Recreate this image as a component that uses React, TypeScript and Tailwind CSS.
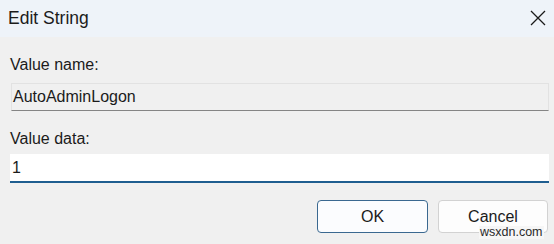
import React from 'react';

const font = { fontFamily: '"Liberation Sans", Arial, sans-serif' };

export default function App() {
  return (
    <div className="relative h-[244px] w-[554px] overflow-hidden bg-[#f0f0f0] text-[#1b1b1b]" style={font}>
      <div className="flex h-[37px] items-center justify-between bg-[#eef3f9] pl-[8px] pr-[8px]">
        <span className="text-[17.5px] leading-none">Edit String</span>
        <svg width="16" height="16" viewBox="0 0 16 16" className="mt-[-1px]">
          <path d="M1 1 L15 15 M15 1 L1 15" stroke="#1a1a1a" strokeWidth="1.3" fill="none" />
        </svg>
      </div>

      <div className="flex flex-col pl-[10px] pr-[5px] pt-[19px]">
        <label className="text-[16px] leading-[18px]">Value name:</label>
        <div className="ml-[1px] mt-[9px] flex h-[28px] items-center border border-[#e2e2e2] border-b-[#858585] bg-[#f0f0f0] pl-[1px] text-[16px] leading-[18px]">
          AutoAdminLogon
        </div>

        <label className="mt-[19px] text-[16px] leading-[18px]">Value data:</label>
        <div className="mt-[6px] flex h-[29px] items-center border-b-2 border-[#1f5e90] bg-white pl-[2px] text-[16px] leading-[18px]">
          1
        </div>

        <div className="mt-[17px] flex justify-end gap-[10px] pr-[1px]">
          <button className="h-[33px] w-[111px] rounded-[4px] border border-[#3a6890] bg-[#fbfcfe] text-[16px]">
            OK
          </button>
          <button className="h-[33px] w-[110px] rounded-[4px] border border-[#d2d2d2] bg-[#fdfdfd] text-[16px]">
            Cancel
          </button>
        </div>
      </div>

      <span className="absolute left-[479px] top-[226px] bg-[#f6f6f6] px-[1px] text-[12.5px] leading-[13px] text-[#2a2a2a]">
        wsxdn.com
      </span>
    </div>
  );
}
